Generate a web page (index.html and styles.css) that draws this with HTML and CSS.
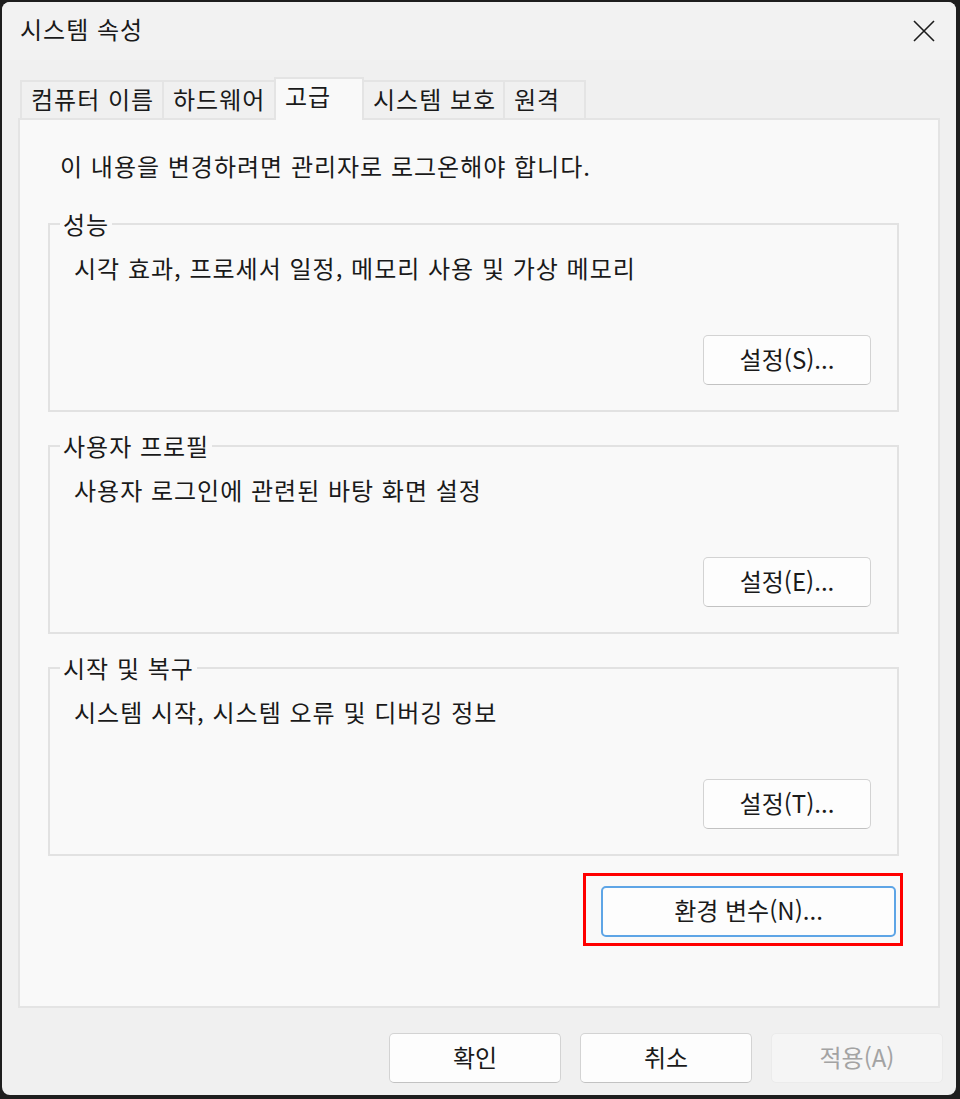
FILE: index.html
```html
<!DOCTYPE html>
<html lang="ko">
<head>
<meta charset="utf-8">
<title>시스템 속성</title>
<link rel="stylesheet" href="styles.css">
</head>
<body>
<div class="window">
  <div class="titlebar">
    <span class="title">시스템 속성</span>
    <span class="close" aria-label="닫기">
      <svg width="22" height="22" viewBox="0 0 22 22"><path d="M1 1 L21 21 M21 1 L1 21" stroke="#1c1c1c" stroke-width="1.6" fill="none"/></svg>
    </span>
  </div>
  <div class="tabs">
    <div class="tab t1">컴퓨터 이름</div>
    <div class="tab t2">하드웨어</div>
    <div class="tab t3 active">고급</div>
    <div class="tab t4">시스템 보호</div>
    <div class="tab t5">원격</div>
  </div>
  <div class="panel">
    <p class="notice">이 내용을 변경하려면 관리자로 로그온해야 합니다.</p>
    <fieldset class="group">
      <legend>성능</legend>
      <p class="desc">시각 효과, 프로세서 일정, 메모리 사용 및 가상 메모리</p>
      <div class="btn-row"><button class="btn">설정(S)...</button></div>
    </fieldset>
    <fieldset class="group">
      <legend>사용자 프로필</legend>
      <p class="desc">사용자 로그인에 관련된 바탕 화면 설정</p>
      <div class="btn-row"><button class="btn">설정(E)...</button></div>
    </fieldset>
    <fieldset class="group">
      <legend>시작 및 복구</legend>
      <p class="desc">시스템 시작, 시스템 오류 및 디버깅 정보</p>
      <div class="btn-row"><button class="btn">설정(T)...</button></div>
    </fieldset>
    <div class="env-row">
      <div class="env-wrap">
        <button class="btn env">환경 변수(N)...</button>
        <span class="highlight"></span>
      </div>
    </div>
  </div>
  <div class="footer">
    <button class="btn foot">확인</button>
    <button class="btn foot">취소</button>
    <button class="btn foot disabled">적용(A)</button>
  </div>
</div>
</body>
</html>
```

FILE: styles.css
```css
* { box-sizing: border-box; }
html, body { margin: 0; padding: 0; }
body {
  background: #1e1e1e;
  width: 960px;
  height: 1099px;
  overflow: hidden;
  font-family: "Noto Sans CJK KR", "Noto Sans", sans-serif;
  font-size: 24px;
  letter-spacing: 1px;
  word-spacing: 0;
  color: #1a1a1a;
}
.window {
  margin: 2px 0 0 2px;
  width: 954px;
  height: 1093px;
  background: #f0f0f0;
  border-radius: 8px;
  display: flex;
  flex-direction: column;
  overflow: hidden;
}
.titlebar {
  height: 58px;
  display: flex;
  align-items: center;
  justify-content: space-between;
  padding: 0 21px 0 18px;
  background: #f2f2f2;
}
.title { line-height: 30px; margin-bottom: 4px; }
.close { display: flex; }
.tabs {
  margin-top: 20px;
  padding-left: 18px;
  height: 38px;
  display: flex;
  align-items: flex-end;
  position: relative;
  z-index: 1;
}
.tab {
  height: 38px;
  border: 2px solid #e4e4e4;
  border-bottom: none;
  background: #f0f0f0;
  padding-left: 9px;
  line-height: 33px;
  white-space: nowrap;
  margin-left: -2px;
}
.t1 { width: 144px; margin-left: 0; }
.t2 { width: 114px; }
.t3 { width: 90px; }
.t4 { width: 143px; }
.t5 { width: 83px; }
.tab.active {
  height: 43px;
  margin-bottom: -2px;
  background: #f9f9f9;
  position: relative;
  z-index: 2;
  line-height: 34px;
}
.panel {
  margin: 0 16px;
  height: 890px;
  border: 2px solid #e4e4e4;
  background: #f9f9f9;
  padding: 31px 39px 0 28px;
  display: flex;
  flex-direction: column;
}
.notice {
  margin: 0 0 29px 12px;
  line-height: 30px;
}
.group {
  margin: 0 0 20px 0;
  padding: 0 26px 25px 10px;
  border: 2px solid #e2e2e2;
  min-width: 0;
}
.group legend {
  padding: 0 3px;
  line-height: 28px;
  margin-bottom: 2px;
}
.desc {
  margin: 13px 0 52px 14px;
  line-height: 30px;
}
.btn-row {
  display: flex;
  justify-content: flex-end;
}
.btn {
  font-family: inherit;
  font-size: 24px;
  letter-spacing: 0;
  color: #1a1a1a;
  background: #fdfdfd;
  border: 1px solid #d3d3d3;
  border-bottom-color: #c2c2c2;
  border-radius: 5px;
  width: 168px;
  height: 50px;
  padding: 0 0 3px 0;
  line-height: 1;
}
.env-row {
  margin-top: 10px;
  display: flex;
  justify-content: flex-end;
  padding-right: 3px;
}
.env-wrap { position: relative; }
.btn.env {
  width: 295px;
  height: 51px;
  border: 2px solid #5ea5e6;
}
.highlight {
  position: absolute;
  left: -18px;
  top: -13px;
  right: -7px;
  bottom: -9px;
  border: 3.5px solid #ff0000;
  pointer-events: none;
}
.footer {
  display: flex;
  justify-content: flex-end;
  gap: 19px;
  padding: 25px 13px 0 0;
}
.btn.foot {
  width: 172px;
  height: 50px;
}
.btn.disabled {
  background: #f5f5f5;
  border-color: #ebebeb;
  color: #a3a3a3;
}
```
